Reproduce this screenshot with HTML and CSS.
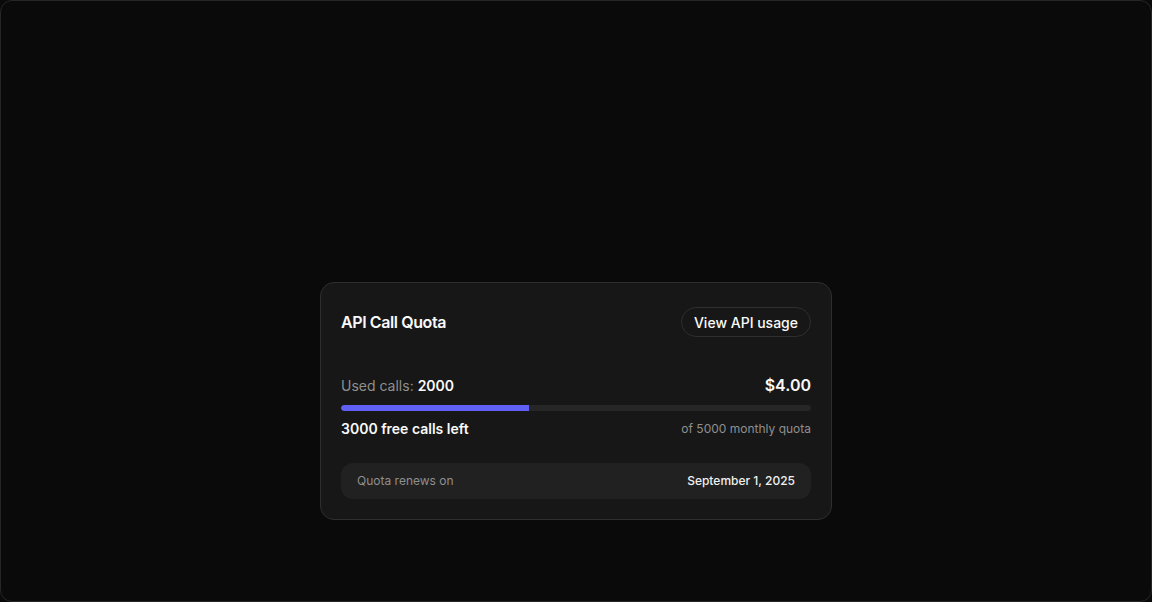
FILE: index.html
```html
<!DOCTYPE html>
<html lang="en">
<head>
<meta charset="utf-8">
<title>API Call Quota</title>
<link rel="stylesheet" href="styles.css">
</head>
<body>
<div class="frame">
  <section class="card">
    <header class="card-head">
      <h2 class="title">API Call Quota</h2>
      <button class="btn">View API usage</button>
    </header>
    <div class="usage">
      <div class="row top">
        <span class="used">Used calls: <strong>2000</strong></span>
        <span class="cost">$4.00</span>
      </div>
      <div class="track"><div class="fill" style="width:40%"></div></div>
      <div class="row bottom">
        <span class="left">3000 free calls left</span>
        <span class="quota">of 5000 monthly quota</span>
      </div>
    </div>
    <div class="renew">
      <span class="renew-label">Quota renews on</span>
      <span class="renew-date">September 1, 2025</span>
    </div>
  </section>
</div>
</body>
</html>
```

FILE: styles.css
```css
* { box-sizing: border-box; }
html, body { margin: 0; padding: 0; background: #0a0a0a; }
body {
  font-family: Inter, "Noto Sans", sans-serif;
  color: #fafafa;
  -webkit-font-smoothing: antialiased;
}
.frame {
  width: 1152px;
  height: 602px;
  border: 1px solid #262626;
  border-radius: 12px;
  background: #0a0a0a;
  display: flex;
  justify-content: center;
  align-items: flex-start;
  padding-top: 281px;
}
.card {
  width: 512px;
  background: #171717;
  border: 1px solid #2e2e2e;
  border-radius: 14px;
  padding: 20px;
}
.card-head {
  height: 38px;
  display: flex;
  align-items: center;
  justify-content: space-between;
}
.title {
  margin: 0;
  font-size: 16px;
  font-weight: 600;
  letter-spacing: -0.4px;
  line-height: 24px;
}
.btn {
  height: 30px;
  padding: 0 12px;
  border-radius: 999px;
  border: 1px solid #2e2e2e;
  background: transparent;
  color: #fafafa;
  font-family: inherit;
  font-size: 14px;
  font-weight: 500;
}
.usage { margin-top: 32px; }
.row {
  display: flex;
  justify-content: space-between;
  align-items: center;
}
.row.top { height: 24px; }
.used { font-size: 14px; color: #8f8f8f; }
.used strong { color: #fafafa; font-weight: 600; }
.cost { font-size: 16px; font-weight: 600; }
.track {
  margin-top: 8px;
  height: 6px;
  border-radius: 999px;
  background: #262626;
  overflow: hidden;
}
.fill { height: 100%; background: #6060f6; border-radius: 999px 0 0 999px; }
.row.bottom { margin-top: 8px; height: 20px; padding-bottom: 1px; }
.left { font-size: 14px; font-weight: 600; }
.quota { font-size: 12px; color: #8f8f8f; }
.renew {
  margin-top: 24px;
  height: 36px;
  border-radius: 12px;
  background: #212121;
  padding: 0 16px 1px;
  display: flex;
  align-items: center;
  justify-content: space-between;
  font-size: 12px;
}
.renew-label { color: #8f8f8f; }
.renew-date { color: #f0f0f0; font-weight: 500; }
```
